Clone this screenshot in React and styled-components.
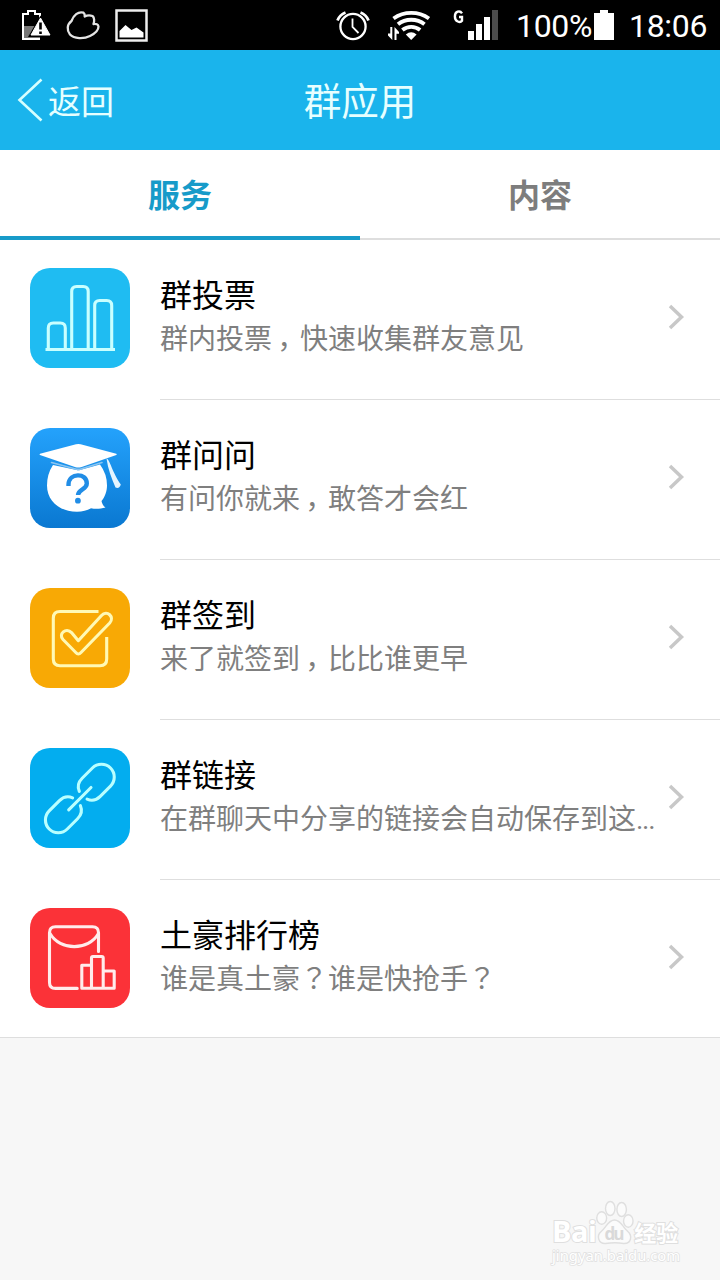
import React from "react";
import styled, { createGlobalStyle } from "styled-components";

const GlobalStyle = createGlobalStyle`
  *, *::before, *::after { box-sizing: border-box; }
  body {
    margin: 0;
    background: #f7f7f7;
    font-family: Roboto, "Noto Sans CJK SC", sans-serif;
  }
  svg { display: block; flex: none; }
`;

const Screen = styled.main`
  display: flex;
  flex-direction: column;
  width: 720px;
  height: 1280px;
  overflow: hidden;
  background: #f7f7f7;
`;

const StatusBar = styled.div`
  display: flex;
  justify-content: space-between;
  height: 50px;
  flex: none;
  padding: 0 12px 0 21px;
  background: #000;
  color: #fff;
`;

const StatusGroup = styled.div`
  display: flex;
  align-items: center;
  gap: ${(p) => p.$gap || 0}px;
`;

const StatusText = styled.span`
  width: ${(p) => p.$width}px;
  margin-left: ${(p) => p.$left}px;
  font-size: 32px;
  line-height: 50px;
  letter-spacing: -0.3px;
  white-space: nowrap;
  padding-top: 2px;
`;

const Header = styled.header`
  display: grid;
  grid-template-columns: 1fr auto 1fr;
  align-items: center;
  height: 100px;
  flex: none;
  padding: 0 17px;
  background: #1ab4ec;
  color: #e6ffff;
`;

const BackButton = styled.button`
  display: flex;
  align-items: center;
  gap: 4px;
  padding: 0;
  border: 0;
  background: none;
  color: inherit;
  font: 400 33px/48px "Noto Sans CJK SC", sans-serif;
`;

const Title = styled.h1`
  margin: 0;
  padding-bottom: 3px;
  font: 400 37.5px/54px "Noto Sans CJK SC", sans-serif;
`;

const Tabs = styled.nav`
  display: grid;
  grid-template-columns: 1fr 1fr;
  height: 90px;
  flex: none;
  background: #fff;
`;

const Tab = styled.button`
  padding: 0;
  border: 0;
  border-bottom: ${(p) => (p.$active ? "4px solid #179bc9" : "2px solid #dedede")};
  padding-bottom: ${(p) => (p.$active ? 0 : 2)}px;
  background: none;
  color: ${(p) => (p.$active ? "#179bc9" : "#7d7d7d")};
  font: 700 32px/86px "Noto Sans CJK SC", sans-serif;
`;

const List = styled.ul`
  display: flex;
  flex-direction: column;
  height: 798px;
  flex: none;
  margin: 0;
  padding: 0;
  list-style: none;
  background: #fff;
  border-bottom: 1px solid #dedede;
`;

const Row = styled.li`
  display: flex;
  flex: none;
  height: 160px;
  padding-left: 30px;
  gap: 30px;

  &:last-child { height: 157px; }
`;

const AppTile = styled.div`
  width: 100px;
  height: 100px;
  flex: none;
  margin-top: 28px;
  border-radius: 20px;
  background: ${(p) => p.$fill};
`;

const RowBody = styled.div`
  display: flex;
  flex: 1;
  min-width: 0;
  padding-right: 34px;
  border-bottom: 1px solid #dedede;

  ${Row}:last-child & { border-bottom: 0; }
`;

const RowText = styled.div`
  flex: 1;
  min-width: 0;
  padding-top: 30px;
  font-family: "Noto Sans CJK SC", sans-serif;
`;

const RowTitle = styled.h2`
  margin: 0;
  color: #000;
  font-size: 32px;
  font-weight: 400;
  line-height: 46px;
`;

const RowNote = styled.p`
  margin: 0;
  color: #7f7f7f;
  font-size: 28px;
  line-height: 42px;
  white-space: nowrap;
`;

const Comma = styled.span`
  display: inline-block;
  width: 28px;
  text-indent: -2px;
  font-family: "Noto Sans CJK TC", sans-serif;
  line-height: 0;
  vertical-align: -8px;
`;

const Question = styled.span`
  font-family: "Noto Sans CJK TC", sans-serif;
`;

const Ellipsis = styled.span`
  font-family: Roboto, sans-serif;
  letter-spacing: -1.3px;
`;

const ChevronSlot = styled.div`
  width: 20px;
  flex: none;
  padding-top: 63px;
`;

const Footer = styled.footer`
  display: flex;
  flex: 1;
  flex-direction: column;
  align-items: flex-start;
  justify-content: flex-end;
  padding: 0 0 16px 552px;
`;

const BrandRow = styled.div`
  display: flex;
  align-items: flex-end;
  height: 46px;
`;

const BrandText = styled.span`
  color: #fff;
  font: 700 ${(p) => p.$size}px/30px ${(p) => p.$family}, sans-serif;
  -webkit-text-stroke: 2px #dfdfdf;
  paint-order: stroke fill;
  letter-spacing: ${(p) => p.$spacing || 0}px;
`;

const BrandUrl = styled.span`
  color: #fff;
  font: 400 14.8px/18px "Noto Sans", sans-serif;
  -webkit-text-stroke: 1.5px #e0e0e0;
  paint-order: stroke fill;
`;

const BatteryAlertIcon = () => (
  <svg width="30" height="32" viewBox="0 0 30 32">
    <path d="M2 17h17v13H2z" fill="#777" />
    <path d="M19 14V5h-5V2H7v3H2v25h17" fill="none" stroke="#fff" strokeWidth="2" />
    <path d="M19.500 6.500L31 28H7z" fill="#000" />
    <path d="M19.500 9L29 26H10z" fill="#fff" stroke="#fff" strokeLinejoin="round" />
    <path d="M19.500 13.500v7m0 2v2.500" stroke="#000" strokeWidth="2.600" />
  </svg>
);

const CloudIcon = () => (
  <svg width="34" height="32" viewBox="0 0 34 32">
    <path
      d="M17.500 3.700C12 2 7.500 6.500 5.500 12C1 15.500 .5 21 4 25.500C8 30 18 30 24 27C29 24.500 32.500 20.500 32.500 17.500C32.300 15.500 30 14.500 27.500 15C28.500 12.500 28.500 8.500 26.500 7C24 6 20.500 6.500 18.700 7.500C18.900 6 18.700 4.500 17.500 3.700Z"
      fill="none" stroke="#e4e4e4" strokeWidth="2.300" strokeLinejoin="round"
    />
  </svg>
);

const PictureIcon = () => (
  <svg width="33" height="33" viewBox="0 0 33 33">
    <rect x="1.500" y="1.500" width="30" height="30" fill="none" stroke="#eee" strokeWidth="2.500" />
    <path d="M4.500 28.500V22l6-6 6 5 5-2.500 7 5v5z" fill="#fff" />
  </svg>
);

const AlarmIcon = () => (
  <svg width="34" height="32" viewBox="0 0 34 32" fill="none" stroke="#fff">
    <circle cx="17" cy="17.500" r="12.600" strokeWidth="2.300" />
    <path d="M16.500 9.500v8.500l6 6" strokeWidth="1.800" />
    <path d="M1.500 11.500C3 7.500 5.500 5 9.500 3.500M32.500 11.500C31 7.500 28.500 5 24.500 3.500" strokeWidth="2.800" />
  </svg>
);

const WifiIcon = () => (
  <svg width="44" height="32" viewBox="0 0 44 32">
    <g fill="none" stroke="#fff" strokeWidth="3.900">
      <path d="M6.500 9.500C17 2 31.500 2 42 9.500" />
      <path d="M11 15.300C18.500 9.300 30 9.300 37.500 15.300" />
      <path d="M15.400 21C20.500 16.800 28 16.800 33.100 21" />
    </g>
    <path d="M18.800 25.500Q24.200 21 29.600 25.500L24.200 31z" fill="#fff" />
    <path d="M1 24.500h2.300V18h2v13L1 26.500zM7.500 31V18l4.500 5v1.800H9.500V31z" fill="#fff" />
  </svg>
);

const SignalIcon = () => (
  <svg width="46" height="32" viewBox="0 0 46 32">
    <path d="M10 4.300C8 1.200 2.900 2 2.900 7.500S8.300 13.900 10 11.800V8H7" fill="none" stroke="#fff" strokeWidth="2.400" />
    <path d="M16 22h6v9h-6zM24 15h6v16h-6zM32 8h6v23h-6z" fill="#fff" />
    <path d="M40 1h6v30h-6z" fill="#4b4b4b" />
  </svg>
);

const BatteryIcon = () => (
  <svg width="20" height="32" viewBox="0 0 20 32">
    <path d="M6 1h8v3h6v27H0V4h6z" fill="#fff" />
  </svg>
);

const BackIcon = () => (
  <svg width="27" height="44" viewBox="0 0 27 44">
    <path d="M24.500 1.500L2.500 22l22 20.500" fill="none" stroke="#d5ffff" strokeWidth="2.600" />
  </svg>
);

const ChevronIcon = () => (
  <svg width="20" height="28" viewBox="0 0 20 28">
    <path d="M4 3l11.500 11L4 25" fill="none" stroke="#c8c8c8" strokeWidth="3.500" />
  </svg>
);

const LineArt = styled.svg.attrs({ width: 100, height: 100, viewBox: "0 0 100 100" })`
  fill: none;
  stroke: ${(p) => p.$stroke};
  stroke-width: 3.1;
  stroke-linecap: round;
  stroke-linejoin: round;
`;

const VoteArt = () => (
  <LineArt $stroke="#c9ffff">
    <path strokeLinecap="butt" d="M15.500 81.500H85M18.300 81V60q0-5 5-5h7q5 0 5 5v21M41.700 81V23.500q0-5 5-5h6.500q5 0 5 5V81M64.700 81V37.500q0-5 5-5h7q5 0 5 5V81" />
  </LineArt>
);

const AskArt = () => (
  <LineArt $stroke="none">
    <path d="M23 37Q17 46 17 57.500C17 73 29.500 83.700 47 83.700C52.500 83.700 57 82.500 61 80.200C65 81 70 81 75.500 79.500C73 78 72 75 71.500 73C75 69 77 63 77 57.500Q77 46 70 36.500L50 42Q48.300 42.500 46.500 42Z" fill="#fff" />
    <path d="M21.500 34.500L46.500 41.200q1.800.4 3.600 0L72 34.500" stroke="#8cc5f0" strokeWidth="1.600" />
    <path d="M10 25.700L46 16.200q2.300-.6 4.600 0L86.300 25.700q1 .8 0 1.400L51 39.200q-2.700.8-5.400 0L10 27.100q-1-.7 0-1.400Z" fill="#fff" />
    <path d="M76.500 30.500C79.500 30.500 82.500 45 90.800 56.500Q89.500 61 85.500 59.500C81.500 50 78 41 76.500 30.500Z" fill="#e5f5ff" />
    <path d="M38.500 58V56.500C39 44.500 56.800 44.500 56.800 55.500C56.800 61.500 48.300 61 48 67" stroke="#218de6" strokeWidth="4.400" strokeLinecap="butt" />
    <circle cx="47.900" cy="72.700" r="2.900" fill="#218de6" />
  </LineArt>
);

const CheckArt = () => (
  <LineArt $stroke="#fff9b5">
    <path d="M68.500 23.500H30q-6.700 0-6.700 6.700v40.800q0 6.700 6.700 6.700h40q6.700 0 6.700-6.700V49" strokeLinecap="butt" />
    <path d="M48.300 52.700L41.500 44.600C36 39 28 46 33 51.500L45.800 64.500Q48.300 67.500 51 64.500L79.700 35C85 29 77 21.500 71.500 27.500Z" />
  </LineArt>
);

const LinkArt = () => (
  <LineArt $stroke="#b9ffff">
    <g transform="translate(66.500 34) rotate(-45)">
      <path d="M-18.800 -5.500C-17 -10 -13 -12.800 -7.500 -12.800H7A12.800 12.800 0 0 1 7 12.800H-7.500C-13 12.800 -17 10 -18.800 5.500" />
    </g>
    <g transform="translate(33.200 67) rotate(135)">
      <path d="M-18.800 -5.500C-17 -10 -13 -12.800 -7.500 -12.800H7A12.800 12.800 0 0 1 7 12.800H-7.500C-13 12.800 -17 10 -18.800 5.500" />
    </g>
    <path d="M38.700 61.800L61 39.500" />
  </LineArt>
);

const RankArt = () => (
  <LineArt $stroke="#ffecec">
    <path d="M47.200 80.400H25.500q-6 0-6-6V24.700q0-6 6-6h37q6 0 6 6V43.500" />
    <path d="M20 25.500C30 43 58.500 43 68.500 25.500" />
    <path d="M61.300 57.200H51.800V80.300H84.200V63H73.200M61.500 80V50q0-1.500 1.500-1.500h8.700q1.500 0 1.500 1.500v30" />
  </LineArt>
);

const PawIcon = () => (
  <svg width="38" height="46" viewBox="0 0 40 46" preserveAspectRatio="none">
    <g fill="#fbfbfb" stroke="#dfdfdf" strokeWidth="1.500">
      <ellipse cx="6" cy="18" rx="5.200" ry="6.200" />
      <ellipse cx="15" cy="8.500" rx="5" ry="7" />
      <ellipse cx="27" cy="9.500" rx="5" ry="7" />
      <ellipse cx="34" cy="21" rx="5" ry="6.200" />
      <path d="M19.500 20C13 20 11 27 6 31C-.5 36 3 44 10 43.500C17 42.500 23 42.500 29 43.500C37 44 39 36 33 31C28 27 26 20 19.500 20Z" />
    </g>
    <text x="9" y="40" fill="#d9d9d9" fontFamily="Open Sans, sans-serif" fontWeight="700" fontSize="18" textLength="21">du</text>
  </svg>
);

const services = [
  { title: "群投票", note: <>群内投票<Comma>，</Comma>快速收集群友意见</>, fill: "#1fbcf2", Art: VoteArt },
  { title: "群问问", note: <>有问你就来<Comma>，</Comma>敢答才会红</>, fill: "linear-gradient(#24a2fc, #0a78d1)", Art: AskArt },
  { title: "群签到", note: <>来了就签到<Comma>，</Comma>比比谁更早</>, fill: "#f8a905", Art: CheckArt },
  { title: "群链接", note: <>在群聊天中分享的链接会自动保存到这<Ellipsis>...</Ellipsis></>, fill: "#03adef", Art: LinkArt },
  { title: "土豪排行榜", note: <>谁是真土豪<Question>？</Question>谁是快抢手<Question>？</Question></>, fill: "#fb3238", Art: RankArt },
];

export default function App() {
  return (
    <Screen>
      <GlobalStyle />
      <StatusBar>
        <StatusGroup $gap={15}>
          <BatteryAlertIcon />
          <CloudIcon />
          <PictureIcon />
        </StatusGroup>
        <StatusGroup>
          <StatusGroup $gap={17}>
            <AlarmIcon />
            <WifiIcon />
          </StatusGroup>
          <StatusGroup $gap={21}>
            <span />
            <SignalIcon />
          </StatusGroup>
          <StatusText $left={18} $width={78}>100%</StatusText>
          <BatteryIcon />
          <StatusText $left={15} $width={79}>18:06</StatusText>
        </StatusGroup>
      </StatusBar>
      <Header>
        <BackButton><BackIcon />返回</BackButton>
        <Title>群应用</Title>
      </Header>
      <Tabs>
        <Tab $active>服务</Tab>
        <Tab>内容</Tab>
      </Tabs>
      <List>
        {services.map(({ title, note, fill, Art }) => (
          <Row key={title}>
            <AppTile $fill={fill}><Art /></AppTile>
            <RowBody>
              <RowText>
                <RowTitle>{title}</RowTitle>
                <RowNote>{note}</RowNote>
              </RowText>
              <ChevronSlot><ChevronIcon /></ChevronSlot>
            </RowBody>
          </Row>
        ))}
      </List>
      <Footer>
        <BrandRow>
          <BrandText $size={29} $family={'"Open Sans"'} $spacing={-0.5}>Bai</BrandText>
          <PawIcon />
          <BrandText $size={22} $family={'"Noto Sans CJK SC"'}>经验</BrandText>
        </BrandRow>
        <BrandUrl>jingyan.baidu.com</BrandUrl>
      </Footer>
    </Screen>
  );
}
